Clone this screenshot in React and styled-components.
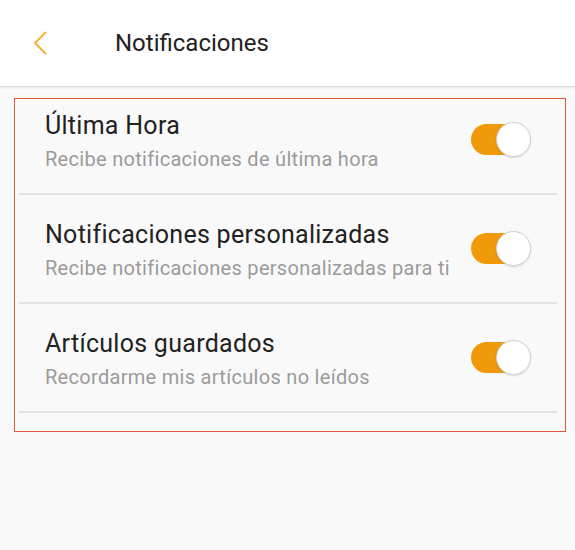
import React, { useState } from 'react'
import styled, { createGlobalStyle } from 'styled-components'

const GlobalStyle = createGlobalStyle`
  html, body {
    margin: 0;
    padding: 0;
    background: #f9f9f9;
    font-family: Roboto, "Liberation Sans", sans-serif;
  }
`

const Page = styled.div`
  width: 575px;
  min-height: 550px;
  background: #f9f9f9;
`

const Header = styled.header`
  height: 86px;
  background: #fff;
  display: flex;
  align-items: center;
  border-bottom: 1px solid #dcdcdc;
  box-shadow: 0 1px 2px rgba(0, 0, 0, 0.08);
`

const BackButton = styled.button`
  width: 80px;
  height: 86px;
  padding: 0 0 0 33px;
  border: 0;
  background: none;
  display: flex;
  align-items: center;
  cursor: pointer;
`

const Title = styled.h1`
  margin: 0 0 0 35px;
  font-size: 24px;
  font-weight: 400;
  color: #222;
`

const Settings = styled.section`
  margin: 11px 9px 0 14px;
  border: 1.5px solid #e25a3c;
  padding: 0 8px 18px 4px;
`

const Row = styled.div`
  box-sizing: border-box;
  display: flex;
  align-items: flex-start;
  height: 109px;
  padding: 25px 26px 0 26px;
  border-bottom: 2px solid #e4e4e4;

  &:first-child {
    height: 96px;
    padding-top: 12px;
  }
`

const Texts = styled.div`
  flex: 1;
  display: flex;
  flex-direction: column;
  gap: 8px;
`

const Label = styled.div`
  font-size: 25px;
  line-height: 29px;
  letter-spacing: 0.28px;
  color: #222;
`

const Hint = styled.div`
  font-size: 20px;
  line-height: 23px;
  letter-spacing: 0.3px;
  color: #9b9b9b;
`

const Track = styled.button`
  position: relative;
  flex: none;
  margin-top: 11px;
  width: 60px;
  height: 35px;
  padding: 0;
  border: 0;
  background: none;
  cursor: pointer;
  &::before {
    content: '';
    position: absolute;
    left: 0;
    top: 2px;
    width: 52px;
    height: 31px;
    border-radius: 16px;
    background: ${p => (p.$on ? '#f09a09' : '#cfcfcf')};
  }
`

const Knob = styled.span`
  position: absolute;
  top: 0;
  left: ${p => (p.$on ? '25px' : '0')};
  width: 33px;
  height: 33px;
  border-radius: 50%;
  background: #fff;
  border: 1px solid #cfcfcf;
  box-shadow: 0 1px 2px rgba(0, 0, 0, 0.12);
`

const items = [
  { title: 'Última Hora', hint: 'Recibe notificaciones de última hora' },
  { title: 'Notificaciones personalizadas', hint: 'Recibe notificaciones personalizadas para ti' },
  { title: 'Artículos guardados', hint: 'Recordarme mis artículos no leídos' },
]

function Toggle({ on, onClick }) {
  return (
    <Track $on={on} onClick={onClick}>
      <Knob $on={on} />
    </Track>
  )
}

export default function App() {
  const [state, setState] = useState([true, true, true])

  return (
    <Page>
      <GlobalStyle />
      <Header>
        <BackButton aria-label="Volver">
          <svg width="14" height="24" viewBox="0 0 14 24" fill="none">
            <path d="M12.5 1.5 L2 12 L12.5 22.5" stroke="#f2af3c" strokeWidth="2" strokeLinecap="round" strokeLinejoin="round" />
          </svg>
        </BackButton>
        <Title>Notificaciones</Title>
      </Header>
      <Settings>
        {items.map((it, i) => (
          <Row key={it.title}>
            <Texts>
              <Label>{it.title}</Label>
              <Hint>{it.hint}</Hint>
            </Texts>
            <Toggle
              on={state[i]}
              onClick={() => setState(s => s.map((v, j) => (j === i ? !v : v)))}
            />
          </Row>
        ))}
      </Settings>
    </Page>
  )
}
